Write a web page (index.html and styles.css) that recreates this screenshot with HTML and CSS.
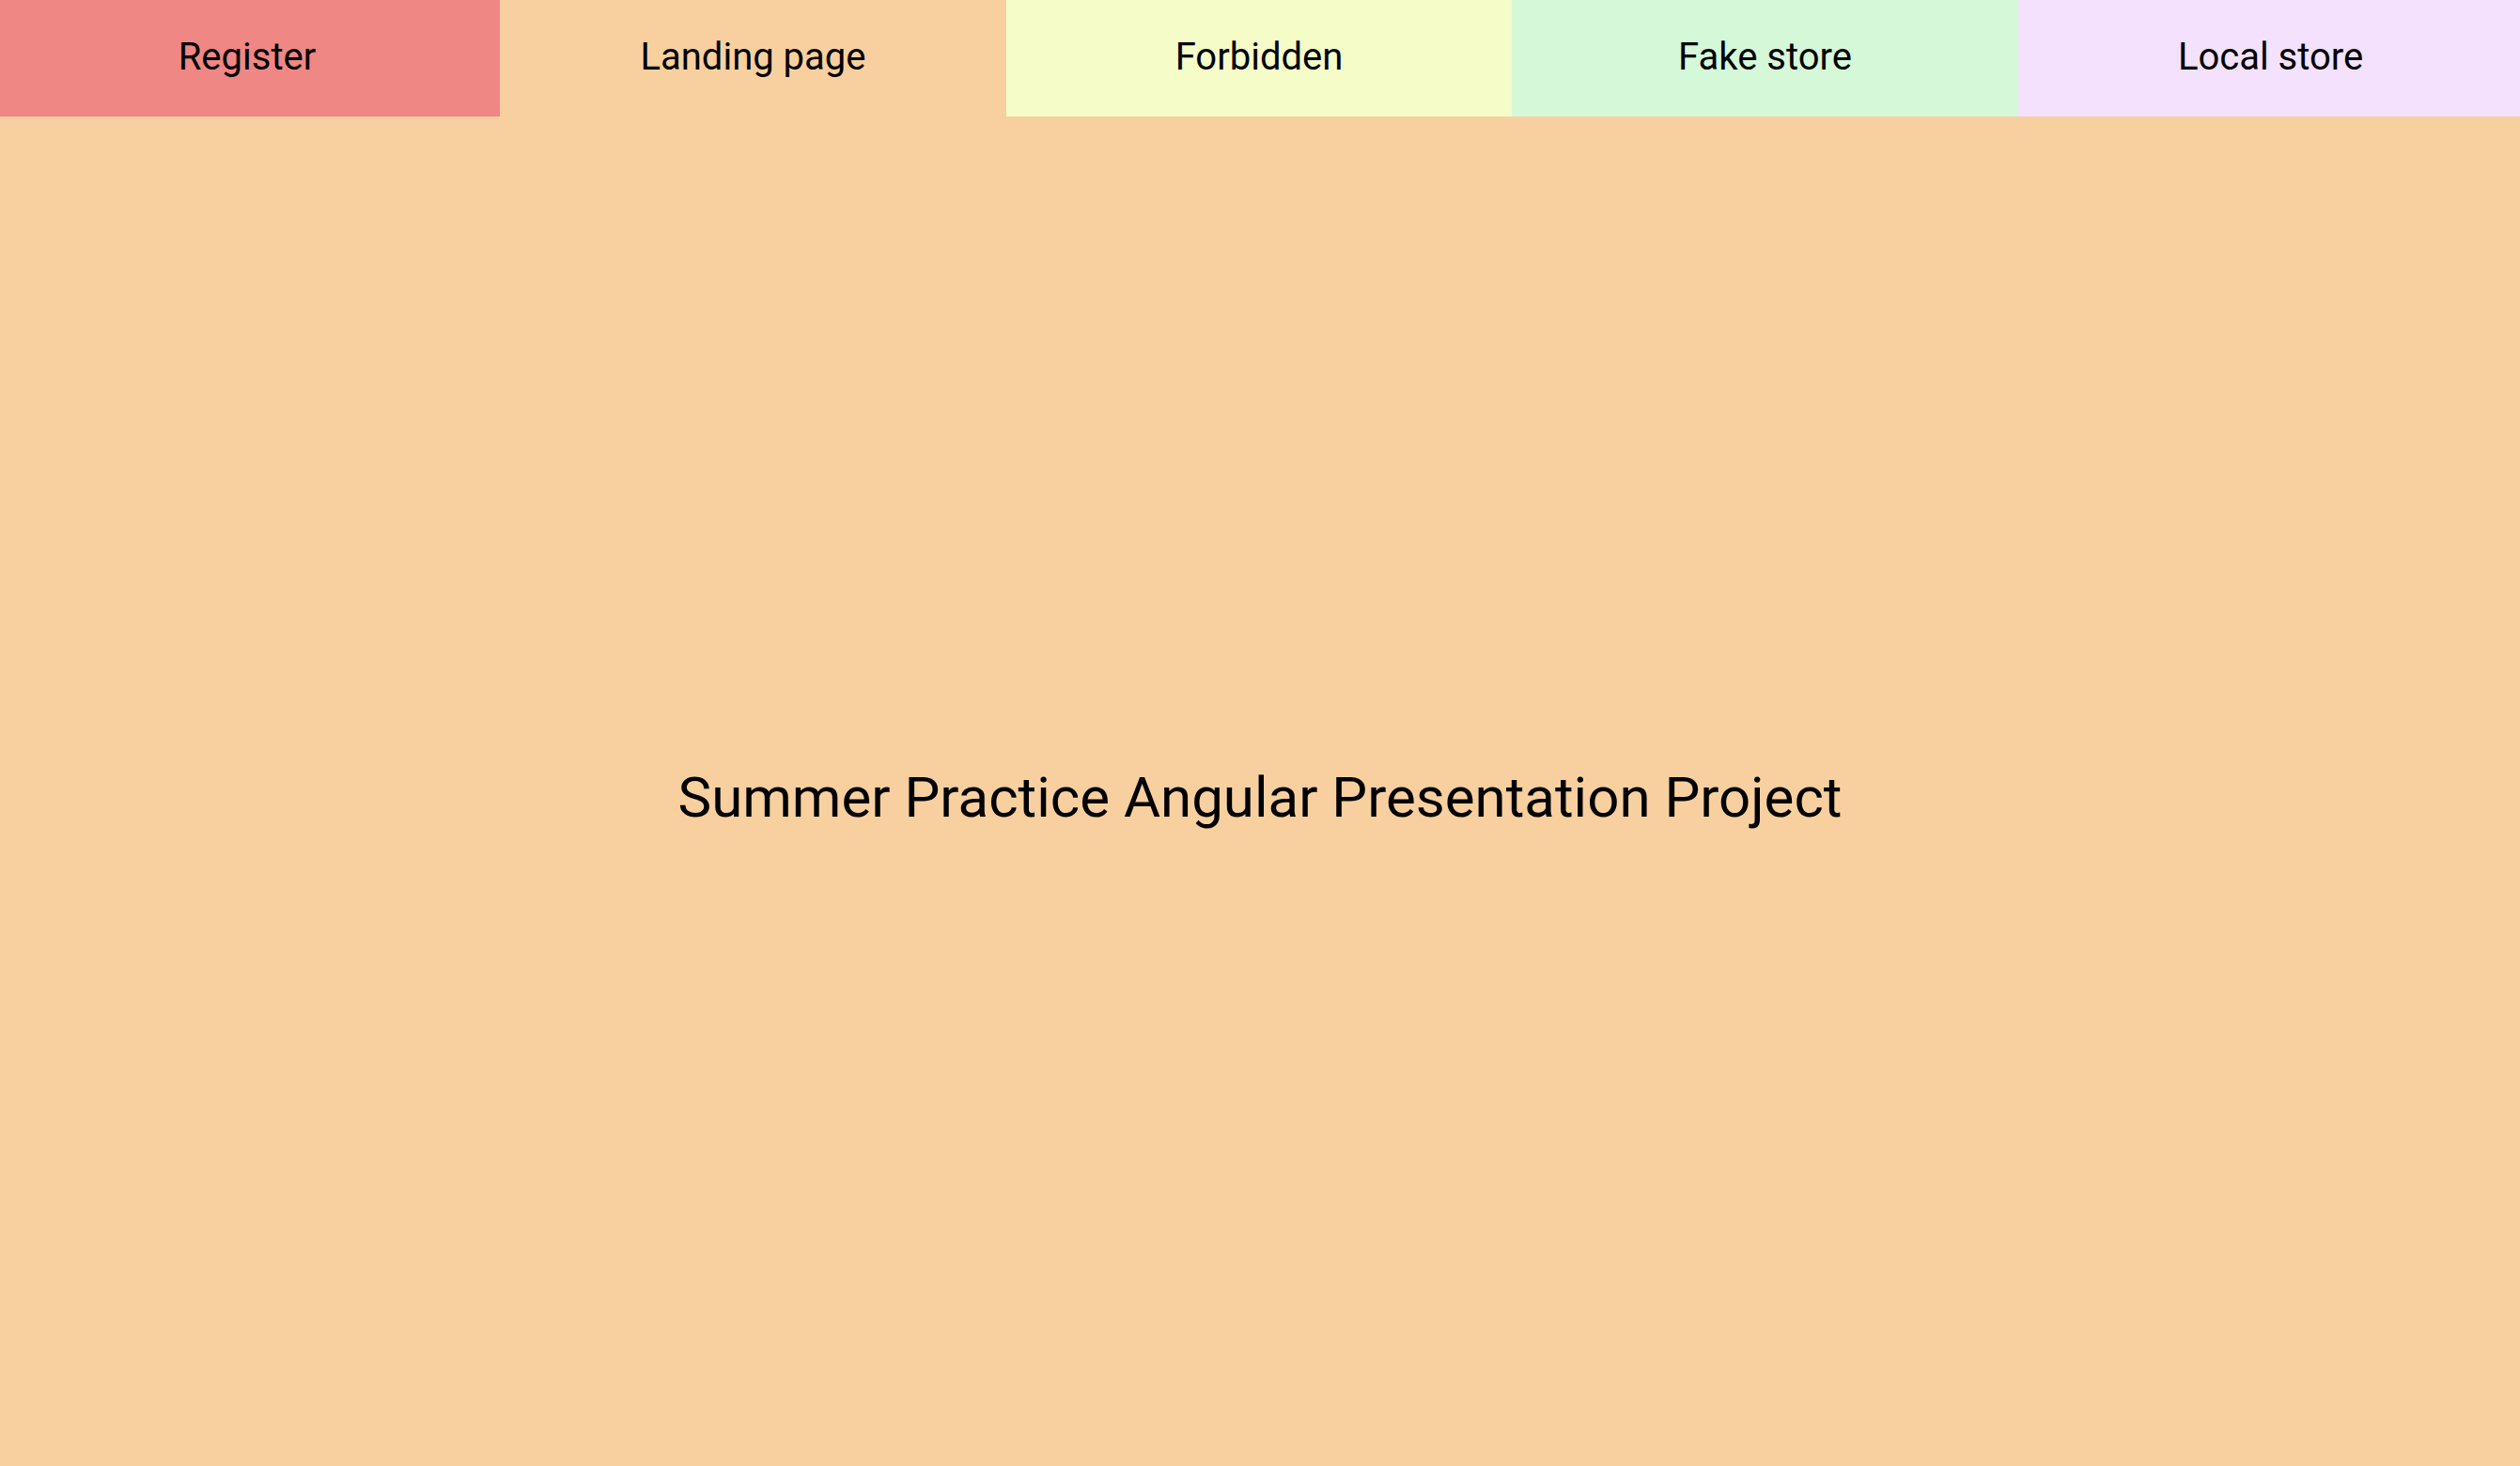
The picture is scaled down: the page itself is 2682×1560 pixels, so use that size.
FILE: index.html
```html
<!DOCTYPE html>
<html lang="en">
<head>
<meta charset="utf-8">
<title>Summer Practice Angular Presentation Project</title>
<link rel="stylesheet" href="styles.css">
</head>
<body>
<div class="app">
  <nav class="nav">
    <a class="tab tab-register" href="#">Register</a>
    <a class="tab tab-landing" href="#">Landing page</a>
    <a class="tab tab-forbidden" href="#">Forbidden</a>
    <a class="tab tab-fake" href="#">Fake store</a>
    <a class="tab tab-local" href="#">Local store</a>
  </nav>
  <main class="main">
    <h1 class="title">Summer Practice Angular Presentation Project</h1>
  </main>
</div>
</body>
</html>
```

FILE: styles.css
```css
html, body {
  margin: 0;
  padding: 0;
  height: 100%;
}
body {
  background: #f8d09f;
  font-family: Roboto, "Noto Sans", "Liberation Sans", sans-serif;
  color: #000;
}
.app {
  display: flex;
  flex-direction: column;
  height: 100vh;
}
.nav {
  display: grid;
  grid-template-columns: 532fr 539fr 538fr 539fr 534fr;
  height: 124px;
  flex: 0 0 auto;
}
.tab {
  display: flex;
  align-items: center;
  justify-content: center;
  padding-bottom: 4px;
  color: #000;
  text-decoration: none;
  font-size: 40px;
  font-weight: 400;
}
.tab-register { background: #ef8784; padding-right: 6px; }
.tab-landing { background: #f8d09f; }
.tab-forbidden { background: #f5fcc8; }
.tab-fake { background: #d5f8d9; }
.tab-local { background: #f3e1fd; padding-left: 3px; }
.main {
  flex: 1 1 auto;
  display: flex;
  align-items: center;
  justify-content: center;
}
.title {
  margin: 0;
  font-size: 60px;
  font-weight: 400;
  position: relative;
  top: 6px;
}
```
